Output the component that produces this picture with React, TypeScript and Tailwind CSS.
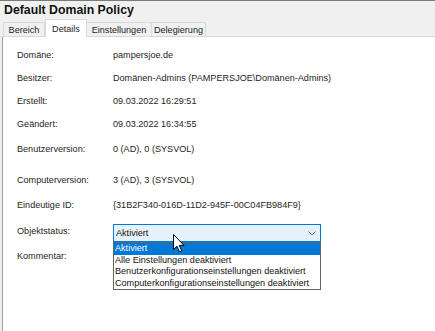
import React from "react";

const rows: { label: string; value: string; cls: string }[] = [
  { label: "Domäne:", value: "pampersjoe.de", cls: "mt-[12px]" },
  { label: "Besitzer:", value: "Domänen-Admins (PAMPERSJOE\\Domänen-Admins)", cls: "mt-[11px]" },
  { label: "Erstellt:", value: "09.03.2022 16:29:51", cls: "mt-[11px]" },
  { label: "Geändert:", value: "09.03.2022 16:34:55", cls: "mt-[11px]" },
  { label: "Benutzerversion:", value: "0 (AD), 0 (SYSVOL)", cls: "mt-[13px]" },
  { label: "Computerversion:", value: "3 (AD), 3 (SYSVOL)", cls: "mt-[19px]" },
  { label: "Eindeutige ID:", value: "{31B2F340-016D-11D2-945F-00C04FB984F9}", cls: "mt-[13px]" },
];

const options = [
  "Aktiviert",
  "Alle Einstellungen deaktiviert",
  "Benutzerkonfigurationseinstellungen deaktiviert",
  "Computerkonfigurationseinstellungen deaktiviert",
];

export default function App() {
  return (
    <div
      className="relative w-[435px] h-[331px] overflow-hidden bg-[#f0f0f0] flex flex-col border-t border-[#7a7a7a] text-[9.1px] text-[#1e1e1e]"
      style={{ fontFamily: '"Liberation Sans", Arial, sans-serif' }}
    >
      <div className="h-[17px] pl-[4px] pt-[2px] text-[12.3px] font-bold leading-[15px] text-[#111]">
        Default Domain Policy
      </div>
      <div className="relative flex items-end h-[19px] pl-[3px] border-b border-[#d9d9d9]">
        <div className="h-[14px] w-[42px] border border-b-0 border-[#d9d9d9] bg-[#f0f0f0] flex items-center justify-center leading-[12px]">
          Bereich
        </div>
        <div className="relative z-10 -mb-px h-[18px] w-[42px] border border-b-0 border-[#d9d9d9] bg-white flex items-start pt-[3px] justify-center leading-[12px]">
          Details
        </div>
        <div className="h-[14px] w-[65px] border border-b-0 border-l-0 border-[#d9d9d9] bg-[#f0f0f0] flex items-center justify-center leading-[12px]">
          Einstellungen
        </div>
        <div className="h-[14px] w-[54px] border border-b-0 border-l-0 border-[#d9d9d9] bg-[#f0f0f0] flex items-center justify-center leading-[12px]">
          Delegierung
        </div>
      </div>
      <div className="relative flex-1 ml-[2px] bg-white border-l border-[#a0a0a0] flex flex-col pl-[14px] leading-[12px]">
        {rows.map((r) => (
          <div key={r.label} className={`flex h-[12px] ${r.cls}`}>
            <div className="w-[96px] shrink-0">{r.label}</div>
            <div className="whitespace-nowrap">{r.value}</div>
          </div>
        ))}
        <div className="flex mt-[13px]">
          <div className="w-[96px] shrink-0 pt-[1px]">Objektstatus:</div>
          <div className="relative">
            <div className="w-[208px] h-[18px] border border-[#0078d7] bg-[#e5f1fb] flex items-center justify-between pl-[2px] pr-[4px]">
              <span className="text-[#111]">Aktiviert</span>
              <svg width="8" height="5" viewBox="0 0 8 5">
                <path d="M0.5 0.5 L4 4 L7.5 0.5" fill="none" stroke="#707070" strokeWidth="1" />
              </svg>
            </div>
            <div className="absolute left-0 top-[18px] z-20 w-[208px] border border-[#646464] bg-white flex flex-col">
              {options.map((o, i) => (
                <div
                  key={o}
                  className={
                    i === 0
                      ? "h-[11.5px] leading-[11.5px] pl-[1px] bg-[#0078d7] text-white whitespace-nowrap"
                      : "h-[11.5px] leading-[11.5px] pl-[1px] text-[#111] whitespace-nowrap"
                  }
                >
                  {o}
                </div>
              ))}
            </div>
          </div>
        </div>
        <div className="flex h-[12px] mt-[8px]">
          <div className="w-[96px] shrink-0">Kommentar:</div>
        </div>
      </div>
      <svg
        className="absolute left-[173px] top-[233px] z-30"
        width="12"
        height="19"
        viewBox="0 0 12 19"
      >
        <path
          d="M0.5 0.5 L0.5 15.5 L4 12.2 L6.6 18 L8.8 17 L6.3 11.4 L11 11.4 Z"
          fill="#ffffff"
          stroke="#000000"
          strokeWidth="1"
          strokeLinejoin="round"
        />
      </svg>
    </div>
  );
}
